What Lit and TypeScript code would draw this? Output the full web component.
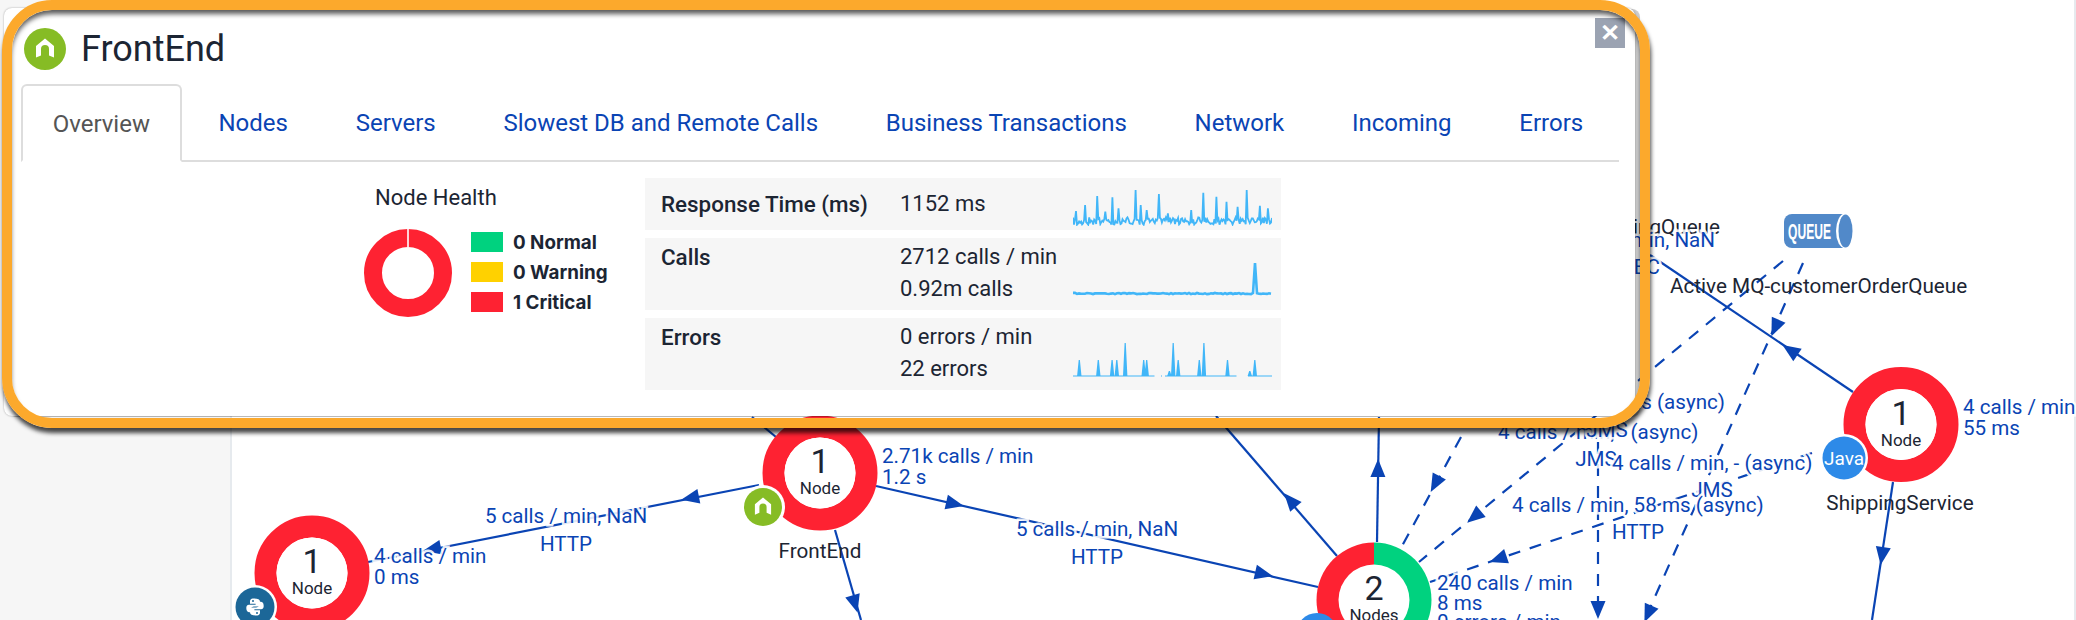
import { LitElement, html, css, svg, unsafeCSS } from "lit";
import { customElement } from "lit/decorators.js";

type Pt = [number, number];
interface Edge { a: Pt; b: Pt; dash?: boolean; arrows: Pt[]; }

const RED = "#fe2232";
const GREEN = "#00d27f";
const BLUE = "#0a44b4";
const HOME = "M-9 -3 L0 -10.5 L9 -3 V8.5 L4 6.5 V0 a4 4 0 0 0 -8 0 V6.5 L-9 8.5 Z";

const EDGES: Edge[] = [
  { a: [759, 485], b: [368, 562], arrows: [[690, 498], [432, 549]] },
  { a: [876, 486], b: [1318, 587], arrows: [[955, 504], [1264, 574]] },
  { a: [835, 530], b: [861, 620], arrows: [[855, 604]] },
  { a: [752, 417], b: [776, 437], arrows: [] },
  { a: [1337, 556], b: [1216, 416], arrows: [[1290, 500]] },
  { a: [1377, 542], b: [1379, 417], arrows: [[1378, 468]] },
  { a: [1853, 392], b: [1650, 255], arrows: [[1790, 350]] },
  { a: [1893, 482], b: [1872, 620], arrows: [[1882, 556]] },
  { a: [1783, 261], b: [1419, 562], dash: true, arrows: [[1474, 517]] },
  { a: [1803, 263], b: [1646, 617], dash: true, arrows: [[1775, 328], [1648, 614]] },
  { a: [1598, 420], b: [1598, 618], dash: true, arrows: [[1598, 610]] },
  { a: [1812, 453], b: [1430, 582], dash: true, arrows: [[1498, 559]] },
  { a: [1461, 437], b: [1401, 548], dash: true, arrows: [[1435, 484]] },
];

function rng(seed: number) {
  let s = seed;
  return () => {
    s = (s * 16807) % 2147483647;
    return s / 2147483647;
  };
}

function responsePath(): string {
  const r = rng(4242);
  const peaks: Pt[] = [[1037, 138], [1060, 120], [1088, 93], [1108, 140], [1124, 97], [1138, 130], [1180, 75], [1190, 120], [1205, 135], [1235, 87], [1255, 145], [1312, 135], [1340, 83], [1370, 95], [1394, 110], [1422, 125], [1444, 75], [1473, 122], [1493, 130]];
  const pts: string[] = [];
  for (let z = 1030; z <= 1503; z += 2.4) {
    let y = 168 + (r() - 0.5) * 22;
    for (const [px, py] of peaks) {
      if (Math.abs(px - z) <= 1.2) y = py;
    }
    pts.push(`${((z - 1030) / 2.376).toFixed(1)},${(165 + y / 3 - 186).toFixed(1)}`);
  }
  return "M" + pts.join(" L");
}

function callsPath(): string {
  const r = rng(99);
  const pts: string[] = [];
  for (let x = 0; x <= 199; x += 2) {
    const y = Math.abs(x - 182) < 1 ? 5 : 35.5 + (r() - 0.5) * 1.2;
    pts.push(`${x},${y.toFixed(1)}`);
  }
  return "M" + pts.join(" L");
}

function errorsPath(): string {
  const peaks: Pt[] = [[1045, 22], [1090, 22], [1123, 22], [1134, 22], [1154, 5], [1198, 22], [1205, 22], [1259, 33], [1268, 5], [1280, 22], [1330, 22], [1341, 5], [1397, 22], [1450, 33], [1462, 22]];
  let d = "";
  for (const [z, y] of peaks) {
    const x = (z - 1030) / 2.376;
    d += `M${(x - 2.2).toFixed(1)} 38 L${(x - 0.6).toFixed(1)} ${y} L${(x + 0.6).toFixed(1)} ${y} L${(x + 2.2).toFixed(1)} 38 Z `;
  }
  return d;
}

const SPARK_RESPONSE = responsePath();
const SPARK_CALLS = callsPath();
const SPARK_ERRORS = errorsPath();
const ERR_BASE = "M0 38 H81.5 M88 38 H89 M92 38 H163.5 M175 38 H199";

@customElement("app-root")
export class AppRoot extends LitElement {
  static styles = css`
    :host {
      display: block;
      position: relative;
      width: 2076px;
      height: 620px;
      overflow: hidden;
      background: #fff;
      font-family: Roboto, "Liberation Sans", sans-serif;
      color: #1c2533;
    }
    .page { display: flex; height: 620px; }
    .side { width: 232px; background: #f6f6f6; border-right: 2px solid #e6eaee; box-sizing: border-box; }
    .main { flex: 1; background: #fff; }
    .rail { width: 2px; background: #e6eaee; }
    .graph { position: absolute; left: 0; top: 0; }
    .lbl { font: 20.6px Roboto, sans-serif; fill: ${unsafeCSS(BLUE)}; paint-order: stroke; stroke: rgba(255,255,255,.9); stroke-width: 5px; }
    .name { font: 20.7px Roboto, sans-serif; fill: #1c2533; }
    .num { font: 34px Roboto, sans-serif; fill: #1c2533; text-anchor: middle; }
    .unit { font: 17px Roboto, sans-serif; fill: #1c2533; text-anchor: middle; }
    .java { font: 19px Roboto, sans-serif; fill: #fff; text-anchor: middle; }
    .qtext { font: bold 22px "Liberation Sans", sans-serif; fill: #fff; }

    .card {
      position: absolute;
      left: 4px;
      top: 8px;
      width: 1631px;
      height: 408px;
      border-radius: 8px;
      background: #fff;
      box-shadow: 5px 1px 0 rgba(0,0,0,.2), 0 0 2px rgba(0,0,0,.35);
    }
    .frame {
      position: absolute;
      left: 2px;
      top: 0;
      width: 1648px;
      height: 428px;
      box-sizing: border-box;
      border: 10px solid #fca92c;
      border-radius: 50px;
      box-shadow: 1px 5px 4px rgba(0,0,0,.72), inset 0 5px 5px -1px rgba(0,0,0,.65);
      pointer-events: none;
    }
    .head { display: flex; align-items: center; gap: 15px; height: 71px; padding: 5px 0 0 20px; }
    .head svg { display: block; }
    .title { font-size: 36px; line-height: 40px; color: #1c2533; }
    .close {
      position: absolute;
      right: 10px;
      top: 10px;
      width: 30px;
      height: 30px;
      background: #9ba3b2;
      color: #fff;
      font: bold 24px/30px "Liberation Sans", sans-serif;
      text-align: center;
    }
    .tabs {
      display: flex;
      height: 78px;
      margin: 0 16px 0 17px;
      border-bottom: 2px solid #ddd;
      box-sizing: border-box;
      font-size: 24px;
      color: ${unsafeCSS(BLUE)};
    }
    .tab { display: flex; align-items: center; padding: 2px 33.85px 0; white-space: nowrap; }
    .tab.active {
      padding: 2px 29.7px 0;
      margin: 0 3px -2px 0;
      border: 2px solid #ddd;
      border-bottom: 2px solid #fff;
      border-radius: 6px 6px 0 0;
      color: #555;
      background: #fff;
    }
    .body { display: flex; padding-left: 360px; }
    .health { width: 281px; }
    .health h3 { margin: 23px 0 0 11px; font-size: 22px; line-height: 26px; font-weight: 400; color: #1c2533; }
    .chart { display: flex; gap: 19px; margin-top: 18px; }
    .chart svg { display: block; }
    .legend { display: flex; flex-direction: column; gap: 10px; margin-top: 3px; }
    .li { display: flex; align-items: center; gap: 10px; height: 20px; font: 700 18.8px Inter, sans-serif; color: #1c2533; white-space: nowrap; }
    .sw { width: 32px; height: 20px; }
    .sw.g { background: ${unsafeCSS(GREEN)}; }
    .sw.y { background: #ffd100; }
    .sw.r { background: ${unsafeCSS(RED)}; }
    .table { width: 636px; margin-top: 16px; display: flex; flex-direction: column; gap: 8px; }
    .row {
      display: grid;
      grid-template-columns: 239px 173px 199px;
      padding: 3px 0 4px 16px;
      background: #f6f6f6;
      font-size: 22px;
      line-height: 32px;
      color: #1c2533;
      box-sizing: border-box;
    }
    .row.one { height: 52px; padding-top: 10px; padding-bottom: 10px; }
    .row.two { height: 72px; }
    .k { font-weight: 500; font-size: 22.4px; white-space: nowrap; }
    .v { white-space: nowrap; }
    .spark { display: block; margin-top: 17px; }
    .row.one .spark { margin-top: -2px; }
  `;

  private arrow(p: Pt, e: Edge) {
    const ang = Math.atan2(e.b[1] - e.a[1], e.b[0] - e.a[0]);
    const cos = Math.cos(ang), sin = Math.sin(ang);
    const len = 9, hw = 7.5;
    const pts = [
      [p[0] + cos * len, p[1] + sin * len],
      [p[0] - cos * len - sin * hw, p[1] - sin * len + cos * hw],
      [p[0] - cos * len + sin * hw, p[1] - sin * len - cos * hw],
    ].map((q) => q.map((n) => n.toFixed(1)).join(",")).join(" ");
    return svg`<polygon points=${pts} fill=${BLUE}></polygon>`;
  }

  private ring(cx: number, cy: number, n: string, unit: string) {
    return svg`
      <circle cx=${cx} cy=${cy} r="46.5" fill="none" stroke=${RED} stroke-width="22"></circle>
      <circle cx=${cx} cy=${cy} r="35.5" fill="#fff"></circle>
      <text class="num" x=${cx} y=${cy}>${n}</text>
      <text class="unit" x=${cx} y=${cy + 21}>${unit}</text>`;
  }

  private graph() {
    const label = (x: number, y: number, t: string, anchor = "start") =>
      svg`<text class="lbl" x=${x} y=${y} text-anchor=${anchor} dominant-baseline="central">${t}</text>`;
    const name = (x: number, y: number, t: string, anchor = "middle") =>
      svg`<text class="name" x=${x} y=${y} text-anchor=${anchor} dominant-baseline="central">${t}</text>`;
    const PY = "M-1 -8.5 C-5 -8.5 -5 -6.5 -5 -5 V-3.2 H0.6 V-2.2 H-6 C-8 -2.2 -8.7 -0.5 -8.7 1 C-8.7 3 -8 5.2 -6 5.2 H-4 V2.5 C-4 0.6 -2.6 -0.5 -1 -0.5 H3 C4.4 -0.5 5 -1.5 5 -3 V-5.2 C5 -7.4 3 -8.5 -1 -8.5 Z";
    return svg`
      ${EDGES.map((e) => svg`
        <line x1=${e.a[0]} y1=${e.a[1]} x2=${e.b[0]} y2=${e.b[1]} stroke=${BLUE} stroke-width="2.2" stroke-dasharray=${e.dash ? "12 10" : "none"}></line>
        ${e.arrows.map((p) => this.arrow(p, e))}`)}

      ${this.ring(312, 573, "1", "Node")}
      <circle cx="255" cy="607" r="22" fill="#fff"></circle>
      <circle cx="255" cy="607" r="19.5" fill="#1c6798"></circle>
      <g transform="translate(255 607)" fill="#fff">
        <path d=${PY}></path>
        <path d=${PY} transform="rotate(180)"></path>
        <circle cx="-2" cy="-6" r="1" fill="#1c6798"></circle>
        <circle cx="2" cy="6" r="1" fill="#1c6798"></circle>
      </g>

      ${this.ring(820, 473, "1", "Node")}
      <circle cx="763" cy="507" r="22" fill="#fff"></circle>
      <circle cx="763" cy="507" r="19" fill="#86bc25"></circle>
      <path transform="translate(763 507) scale(.9)" fill="#fff" d=${HOME}></path>

      <path d="M1374 542.5 a57.5 57.5 0 0 1 0 115 z" fill=${GREEN}></path>
      <path d="M1374 542.5 a57.5 57.5 0 0 0 0 115 z" fill=${RED}></path>
      <circle cx="1374" cy="600" r="35.5" fill="#fff"></circle>
      <text class="num" x="1374" y="600">2</text>
      <text class="unit" x="1374" y="621">Nodes</text>
      <circle cx="1317" cy="634" r="21" fill="#2d8ae8"></circle>

      ${this.ring(1901, 424.5, "1", "Node")}
      <circle cx="1844" cy="458" r="24" fill="#fff"></circle>
      <circle cx="1844" cy="458" r="21.5" fill="#2d8ae8"></circle>
      <text class="java" x="1844" y="458" dominant-baseline="central">Java</text>

      ${label(374, 556, "4 calls / min")}
      ${label(374, 577, "0 ms")}
      ${label(566, 516, "5 calls / min, NaN", "middle")}
      ${label(566, 544, "HTTP", "middle")}
      ${label(882, 456, "2.71k calls / min")}
      ${label(882, 477, "1.2 s")}
      ${name(820, 551, "FrontEnd")}
      ${label(1097, 529, "5 calls / min, NaN", "middle")}
      ${label(1097, 557, "HTTP", "middle")}
      ${label(1437, 583, "240 calls / min")}
      ${label(1437, 603, "8 ms")}
      ${label(1437, 622, "0 errors / min")}
      ${label(1725, 402, "4 calls / min, 22 ms (async)", "end")}
      ${label(1498, 432, "4 calls / min, - (async)")}
      ${label(1607, 430, "JMS", "middle")}
      ${label(1596, 459, "JMS", "middle")}
      ${label(1612, 463, "4 calls / min, - (async)")}
      ${label(1712, 490, "JMS", "middle")}
      ${label(1512, 505, "4 calls / min, 58 ms (async)")}
      ${label(1638, 532, "HTTP", "middle")}
      ${label(1963, 407, "4 calls / min")}
      ${label(1963, 428, "55 ms")}
      ${name(1900, 503, "ShippingService")}
      ${name(1720, 227, "Active MQ-shippingQueue", "end")}
      ${label(1715, 240, "4 calls / min, NaN", "end")}
      ${label(1660, 267, "JDBC", "end")}
      ${name(1670, 286, "Active MQ-customerOrderQueue", "start")}

      <path d="M1792 214 H1845 V248 H1792 A8 8 0 0 1 1784 240 V222 A8 8 0 0 1 1792 214 Z" fill="#5189c9"></path>
      <ellipse cx="1845" cy="231" rx="9" ry="17.5" fill="#fff"></ellipse>
      <ellipse cx="1845.5" cy="231" rx="7" ry="16.5" fill="#5189c9"></ellipse>
      <text class="qtext" x="1788" y="239" textLength="43" lengthAdjust="spacingAndGlyphs">QUEUE</text>
    `;
  }

  render() {
    const tabs = ["Nodes", "Servers", "Slowest DB and Remote Calls", "Business Transactions", "Network", "Incoming", "Errors"];
    return html`
      <div class="page">
        <div class="side"></div>
        <div class="main"></div>
        <div class="rail"></div>
      </div>
      <svg class="graph" width="2076" height="620" viewBox="0 0 2076 620">${this.graph()}</svg>
      <div class="card">
        <div class="head">
          <svg width="42" height="42" viewBox="-21 -21 42 42"><circle r="21" fill="#86bc25"></circle><path fill="#fff" d=${HOME}></path></svg>
          <div class="title">FrontEnd</div>
        </div>
        <div class="close">✕</div>
        <div class="tabs">
          <div class="tab active">Overview</div>
          ${tabs.map((t) => html`<div class="tab">${t}</div>`)}
        </div>
        <div class="body">
          <div class="health">
            <h3>Node Health</h3>
            <div class="chart">
              <svg width="88" height="88" viewBox="0 0 88 88">
                <circle cx="44" cy="44" r="35" fill="none" stroke=${RED} stroke-width="18"></circle>
                <rect x="43.2" y="0" width="1.6" height="18" fill="#fff"></rect>
              </svg>
              <div class="legend">
                <div class="li"><span class="sw g"></span>0 Normal</div>
                <div class="li"><span class="sw y"></span>0 Warning</div>
                <div class="li"><span class="sw r"></span>1 Critical</div>
              </div>
            </div>
          </div>
          <div class="table">
            <div class="row one">
              <div class="k">Response Time (ms)</div>
              <div class="v">1152 ms</div>
              <svg class="spark" width="199" height="40" viewBox="0 0 199 40"><path d=${SPARK_RESPONSE} fill="none" stroke="#41b6f8" stroke-width="1.8"></path></svg>
            </div>
            <div class="row two">
              <div class="k">Calls</div>
              <div class="v">2712 calls / min<br />0.92m calls</div>
              <svg class="spark" width="199" height="40" viewBox="0 0 199 40"><path d=${SPARK_CALLS} fill="none" stroke="#41b6f8" stroke-width="2.6"></path></svg>
            </div>
            <div class="row two">
              <div class="k">Errors</div>
              <div class="v">0 errors / min<br />22 errors</div>
              <svg class="spark" width="199" height="40" viewBox="0 0 199 40"><path d=${SPARK_ERRORS} fill="#41b6f8"></path><path d=${ERR_BASE} fill="none" stroke="#41b6f8" stroke-width="1"></path></svg>
            </div>
          </div>
        </div>
      </div>
      <div class="frame"></div>
    `;
  }
}
